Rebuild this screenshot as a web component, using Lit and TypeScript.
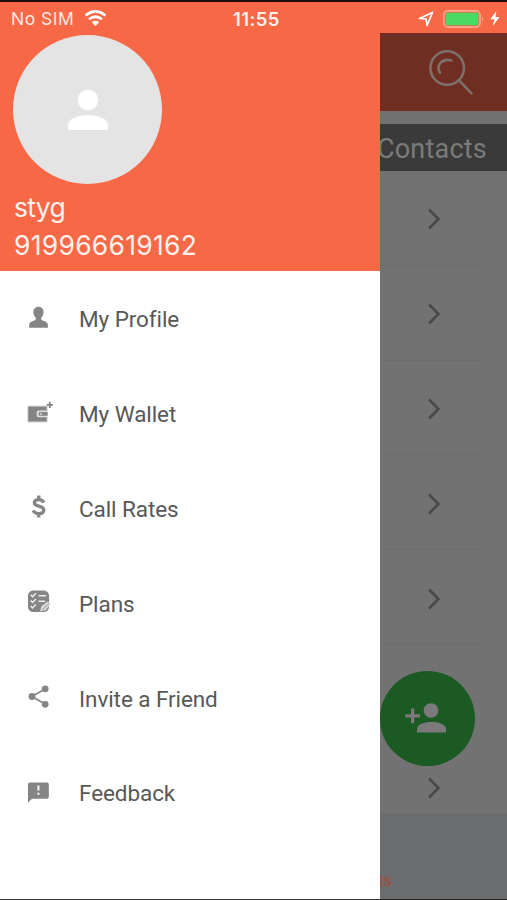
import { LitElement, html, css, svg } from "lit";
import { customElement } from "lit/decorators.js";

const icons = {
  profile: svg`<path d="M12 .8c3.300 0 5.300 2.400 5.300 5.600 0 2.300-.9 4.300-2.400 5.500v1.600c0 1 .8 1.300 2.300 1.900 2.900 1.100 4.600 1.800 4.600 5V22.600H2.200v-2.200c0-3.200 1.700-3.900 4.600-5 1.500-.6 2.300-.9 2.300-1.900v-1.600C7.600 10.700 6.700 8.700 6.700 6.400c0-3.200 2-5.600 5.300-5.600z"/>`,
  wallet: svg`<rect x=".2" y="4.600" width="21.600" height="18" rx="1.500" fill="#dedede"/><path d="M1.300 5.700h19.200v4.300h-8.400q-2 0-2 2v3q0 2 2 2h8.400v4.500H1.300z"/><rect x="12.200" y="11.600" width="9.300" height="3.900" rx=".6"/><circle cx="14.400" cy="13.500" r="1" fill="#dedede"/><path d="M22.800.7h2v2.300h2.300v1.900h-2.300v2.300h-2V4.900h-2.300V3h2.300z"/>`,
  dollar: svg`<path d="M17.500 7.900C16.500 5.700 14.800 4.800 12.300 4.800c-2.700 0-4.600 1.200-4.600 3.200 0 5 9.800 2.200 9.800 7.700 0 2.300-2 3.700-5.200 3.700-2.900 0-4.900-1.100-5.900-3.300M12.300.5v4M12.300 19.500v4" fill="none" stroke="#858585" stroke-width="3.500"/>`,
  plans: svg`<rect x="1" y=".5" width="22" height="22.500" rx="5.500"/><path d="M3.800 5l2 2 3.500-3.700M3.800 11l2 2 3.500-3.700M3.800 16.700l2 2L9.300 15M12 6h8M12 11.800h7" fill="none" stroke="#eee" stroke-width="1.500"/><path d="M13.500 22.500l1.500-5.500 6.500-5 3 2.500-5 6.500z" fill="#dadada"/><path d="M16 20.800l7-6.800" stroke="#aaa" stroke-width="1.200"/>`,
  share: svg`<path d="M19.300 4L5 12l14.300 8.200" fill="none" stroke="#858585" stroke-width="1.800"/><circle cx="19" cy="4" r="3.500"/><circle cx="5.200" cy="12" r="3.600"/><circle cx="19" cy="20.200" r="3.500"/>`,
  feedback: svg`<path d="M3 2.500h17.800q2 0 2 2v13q0 2-2 2H5.200L1 23.700V4.500q0-2 2-2z"/><path d="M10.800 5.800h2.200v5.200h-2.200zM10.800 13.200h2.200v2.300h-2.200z" fill="#f4f4f4"/>`,
};

const menu = [
  { icon: icons.profile, label: "My Profile" },
  { icon: icons.wallet, label: "My Wallet" },
  { icon: icons.dollar, label: "Call Rates" },
  { icon: icons.plans, label: "Plans" },
  { icon: icons.share, label: "Invite a Friend" },
  { icon: icons.feedback, label: "Feedback" },
];

@customElement("status-bar")
class StatusBar extends LitElement {
  static styles = css`
    :host { display: grid; grid-template-columns: 1fr auto 1fr; align-items: center; box-sizing: border-box;
      height: 33px; padding: 2px 7px 0 11px; border-top: 2px solid #20100d; background: #f76847; color: #ffe9e3;
      font: 400 17.5px/28px Inter, sans-serif; }
    svg { display: block; fill: #fff; }
    .left { display: flex; gap: 10px; align-items: center; letter-spacing: .5px; }
    .time { font-weight: 600; letter-spacing: .9px; color: #fff0eb; font-size: 18.5px; letter-spacing: .4px; padding-left: 2px; }
    .right { display: flex; justify-content: flex-end; align-items: center; }
    .loc { margin-right: 9px; }
    .bolt { margin-left: 5px; }
  `;
  render() {
    return html`
      <div class="left"><span>No SIM</span>
        <svg width="23" height="17" viewBox="0 0 23 17"><path d="M1.500 5.500Q11.500-2.600 21.500 5.500M5 9.300Q11.500 4.200 18 9.300" fill="none" stroke="#fff" stroke-width="2.700"/><path d="M7.800 12.200q3.700-2.800 7.400 0L11.500 16z"/></svg>
      </div>
      <div class="time">11:55</div>
      <div class="right">
        <svg class="loc" width="16" height="16" viewBox="0 0 16 16"><path d="M1.500 7.400L14.500 1.500 9 14.300 8 8z" fill="none" stroke="#fff" stroke-width="1.700" stroke-linejoin="round"/></svg>
        <svg width="42" height="18" viewBox="0 0 42 18"><rect x=".9" y=".9" width="36.200" height="16.200" rx="4" fill="none" stroke="#fba993" stroke-width="1.600"/><rect x="2.800" y="2.800" width="32.600" height="12.400" rx="1.500" fill="#4bd964"/><path d="M39 6.300q2.400 2.700 0 5.400z" fill="#fba993"/></svg>
        <svg class="bolt" width="10" height="15" viewBox="0 0 10 15"><path d="M6.300 0L.3 8.300h4L2.800 15l6.800-9H5.500z"/></svg>
      </div>`;
  }
}

@customElement("side-drawer")
class SideDrawer extends LitElement {
  static styles = css`
    :host { display: flex; flex-direction: column; background: #fff; z-index: 1; }
    .head { height: 238px; box-sizing: border-box; padding: 2px 13px 0; background: #f76847; color: #fff2ed;
      font: 400 26.5px/37.500px Inter, sans-serif; }
    .avatar { display: flex; align-items: center; justify-content: center; width: 149px; height: 149px;
      border-radius: 50%; background: #e4e4e4; margin-bottom: 5px; }
    .avatar svg { fill: #fff; }
    .line { padding-left: 1px; white-space: nowrap; }
    .name { letter-spacing: -.7px; }
    .phone { letter-spacing: .27px; }
    .items { display: grid; grid-auto-rows: 94.800px; padding-top: 1px; }
    .item { display: flex; align-items: center; gap: 25px; padding-left: 27px; color: #585858;
      font: 400 22.5px/30px Roboto, sans-serif; letter-spacing: -.08px; }
    .item svg { fill: #858585; width: 27px; height: 23px; margin-top: -4px; flex: none; overflow: visible; }
    .item span { margin-top: 0; }
  `;
  render() {
    return html`
      <div class="head">
        <div class="avatar"><svg width="42" height="42" viewBox="0 0 42 42"><circle cx="21" cy="11" r="10.300"/><path d="M1 41v-4.500C1 29.500 11 26 21 26s20 3.500 20 10.500V41z"/></svg></div>
        <div class="line name">styg</div>
        <div class="line phone">919966619162</div>
      </div>
      <div class="items">
        ${menu.map((m) => html`<div class="item"><svg viewBox="0 0 27 24" preserveAspectRatio="xMinYMid meet">${m.icon}</svg><span>${m.label}</span></div>`)}
      </div>`;
  }
}

@customElement("contacts-page")
class ContactsPage extends LitElement {
  static styles = css`
    :host { position: relative; display: flex; flex-direction: column; background: #727272;
      font-family: Roboto, sans-serif; }
    .bar { height: 78px; background: #702d22; display: flex; justify-content: flex-end; box-sizing: border-box; padding: 16px 33px 0 0; }
    .title { height: 47px; margin-top: 13px; background: #3a3a3a; color: #7b7b7b; font-size: 27px; line-height: 51px;
      letter-spacing: .2px; white-space: nowrap; }
    .title span { margin-left: -3px; }
    .list { height: 643px; display: grid; grid-template-rows: repeat(7, 94.800px); overflow: hidden; }
    .row { display: flex; align-items: center; padding-left: 47px; margin-right: 26px; box-sizing: border-box;
      border-bottom: 1px solid #6c6c6c; }
    .row svg { margin-top: 3px; }
    .row:nth-child(n + 6) { border: 0; }
    .tabs { flex: 1; background: #6b6c6e; border-bottom: 1px solid #252525; color: #a24c3b; font-size: 17px; line-height: 20px;
      padding-top: 56px; white-space: nowrap; }
    .tabs span { margin-left: -2px; }
    .add { position: absolute; right: 32px; top: 638px; width: 95px; height: 95px; border-radius: 50%; background: #1b5a23; }
    .last { align-items: flex-start; }
    .row.last svg { margin-top: 37px; }
  `;
  render() {
    const chevron = html`<svg width="14" height="22" viewBox="0 0 14 22"><path d="M2 1.500L11.500 11 2 20.500" fill="none" stroke="#484848" stroke-width="2.500"/></svg>`;
    return html`
      <div class="bar"><svg width="46" height="48" viewBox="0 0 46 48" fill="none" stroke="#7d706b" stroke-width="2.600" stroke-linecap="round"><circle cx="19.200" cy="19" r="16.800"/><path d="M30.800 31.200L43.500 44.300M12 23.800C7.500 16.500 14 8.800 23.500 11.500"/></svg></div>
      <div class="title"><span>Contacts</span></div>
      <div class="list">${[0, 1, 2, 3, 4, 5, 6].map((i) => html`<div class="row ${i === 6 ? "last" : ""}">${i !== 5 ? chevron : ""}</div>`)}</div>
      <div class="tabs"><span>ts</span></div>
      <svg class="add" viewBox="0 0 95 95" fill="#7c797d"><circle cx="51" cy="39.500" r="7.300"/><path d="M37 61.500v-3.500c0-4.500 7-7 14.500-7S66 53.500 66 58v3.500z"/><path d="M31 37.500h3.200v5.800H40v3.200h-5.800v5.800H31v-5.800h-5.800v-3.200H31z"/></svg>`;
  }
}

@customElement("app-root")
class AppRoot extends LitElement {
  static styles = css`
    :host { display: flex; flex-direction: column; width: 507px; height: 900px; overflow: hidden; }
    .body { flex: 1; display: grid; grid-template-columns: 380px 127px; min-height: 0; }
    side-drawer { border-bottom: 1px solid #333; }
  `;
  render() {
    return html`<status-bar></status-bar><div class="body"><side-drawer></side-drawer><contacts-page></contacts-page></div>`;
  }
}
